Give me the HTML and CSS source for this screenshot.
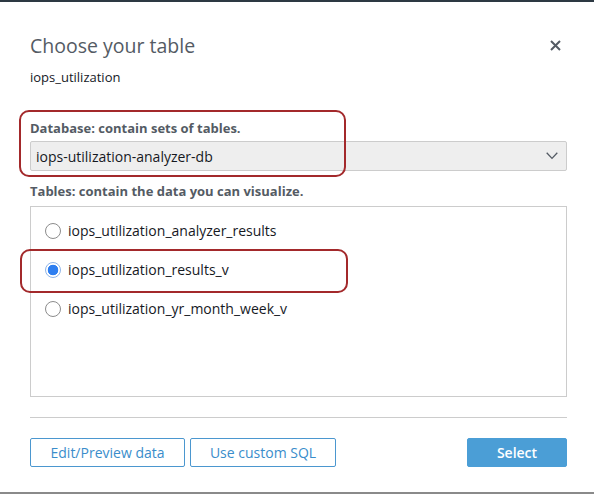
FILE: index.html
```html
<!DOCTYPE html>
<html>
<head>
<meta charset="utf-8">
<link rel="stylesheet" href="styles.css">
</head>
<body>
<div class="topbar"></div>
<div class="dialog">
  <div class="header">
    <h1 class="title">Choose your table</h1>
    <button class="close" aria-label="Close">
      <svg width="11" height="11" viewBox="0 0 11 11"><path d="M1 1 L10 10 M10 1 L1 10" stroke="#545b64" stroke-width="2" fill="none"/></svg>
    </button>
  </div>
  <div class="subtitle">iops_utilization</div>

  <div class="field db-field">
    <div class="label">Database: contain sets of tables.</div>
    <div class="select">
      <span>iops-utilization-analyzer-db</span>
      <svg class="chev" width="12" height="8" viewBox="0 0 12 8"><path d="M0.7 0.8 L6 6.4 L11.3 0.8" stroke="#545b64" stroke-width="1.3" fill="none"/></svg>
    </div>
    <div class="highlight hl-db"></div>
  </div>

  <div class="field">
    <div class="label">Tables: contain the data you can visualize.</div>
    <div class="tables">
      <label class="row"><span class="radio"></span>iops_utilization_analyzer_results</label>
      <label class="row"><span class="radio checked"></span>iops_utilization_results_v</label>
      <label class="row"><span class="radio"></span>iops_utilization_yr_month_week_v</label>
      <div class="highlight hl-row"></div>
    </div>
  </div>

  <div class="divider"></div>

  <div class="footer">
    <div class="left-btns">
      <button class="btn outline btn-edit">Edit/Preview data</button>
      <button class="btn outline btn-sql">Use custom SQL</button>
    </div>
    <button class="btn primary">Select</button>
  </div>
</div>
<div class="bottomline"></div>
</body>
</html>
```
FILE: styles.css
```css
* { box-sizing: border-box; }
html, body { margin: 0; padding: 0; background: #fff; }
body {
  font-family: "Open Sans", "Noto Sans", "DejaVu Sans", sans-serif;
  color: #16191f;
  width: 594px;
  height: 494px;
  overflow: hidden;
  position: relative;
}
.topbar { height: 2px; background: #2d3943; }
.dialog { padding: 30px 27px 0 30px; }
.header { display: flex; justify-content: space-between; align-items: flex-start; }
.title {
  margin: 0;
  font-size: 19.5px;
  font-weight: 400;
  line-height: 28px;
  color: #545b64;
}
.close {
  border: 0; background: none; padding: 0; margin: 8px 6px 0 0;
  width: 11px; height: 11px; display: block; cursor: pointer;
}
.close svg { display: block; }
.subtitle { font-size: 13px; line-height: 18px; margin-top: 8px; color: #16191f; }

.field { position: relative; }
.db-field { margin-top: 33px; }
.label { font-size: 13px; font-weight: 700; line-height: 18px; color: #545b64; }
.select {
  margin-top: 4px;
  height: 30px;
  background: #eeeeee;
  border: 1px solid #cccccc;
  border-radius: 2px;
  display: flex;
  align-items: center;
  justify-content: space-between;
  padding: 0 8px 0 5px;
  font-size: 14px;
  color: #16191f;
}
.chev { display: block; }
.field + .field { margin-top: 11px; }
.tables {
  position: relative;
  margin-top: 6px;
  height: 191px;
  border: 1px solid #cccccc;
  padding: 14px 0 0 14px;
  display: flex;
  flex-direction: column;
  gap: 19px;
}
.row {
  display: flex;
  align-items: center;
  gap: 7px;
  font-size: 14px;
  line-height: 20px;
  color: #16191f;
}
.radio {
  width: 16px; height: 16px; border-radius: 50%;
  border: 1px solid #8c8c8c; background: #fff;
  flex: none;
}
.radio.checked {
  border: 1.5px solid #8fb5e8;
  background: radial-gradient(circle, #2d7ef0 0 5px, #fff 5.6px);
}
.highlight {
  position: absolute;
  border: 2px solid #a3292b;
  border-radius: 10px;
  pointer-events: none;
}
.hl-db { left: -11px; top: -9px; width: 327px; height: 67px; }
.hl-row { left: -11px; top: 42px; width: 328px; height: 44px; }

.divider { height: 1px; background: #cccccc; margin-top: 20px; }
.footer {
  margin-top: 20px;
  display: flex;
  justify-content: space-between;
}
.left-btns { display: flex; gap: 5px; }
.btn {
  font-family: inherit;
  font-size: 14px;
  height: 29px;
  border-radius: 2px;
  padding: 0;
  cursor: pointer;
}
.outline { background: #fff; border: 1px solid #4b97cf; color: #3a8dcb; }
.btn-edit { width: 155px; }
.btn-sql { width: 146px; }
.primary { width: 100px; background: #4b9ed6; border: 1px solid #4b9ed6; color: #fff; font-weight: 600; }
.bottomline { position: absolute; left: 0; right: 0; bottom: 0; height: 2px; background: #8a8a8a; }
```
